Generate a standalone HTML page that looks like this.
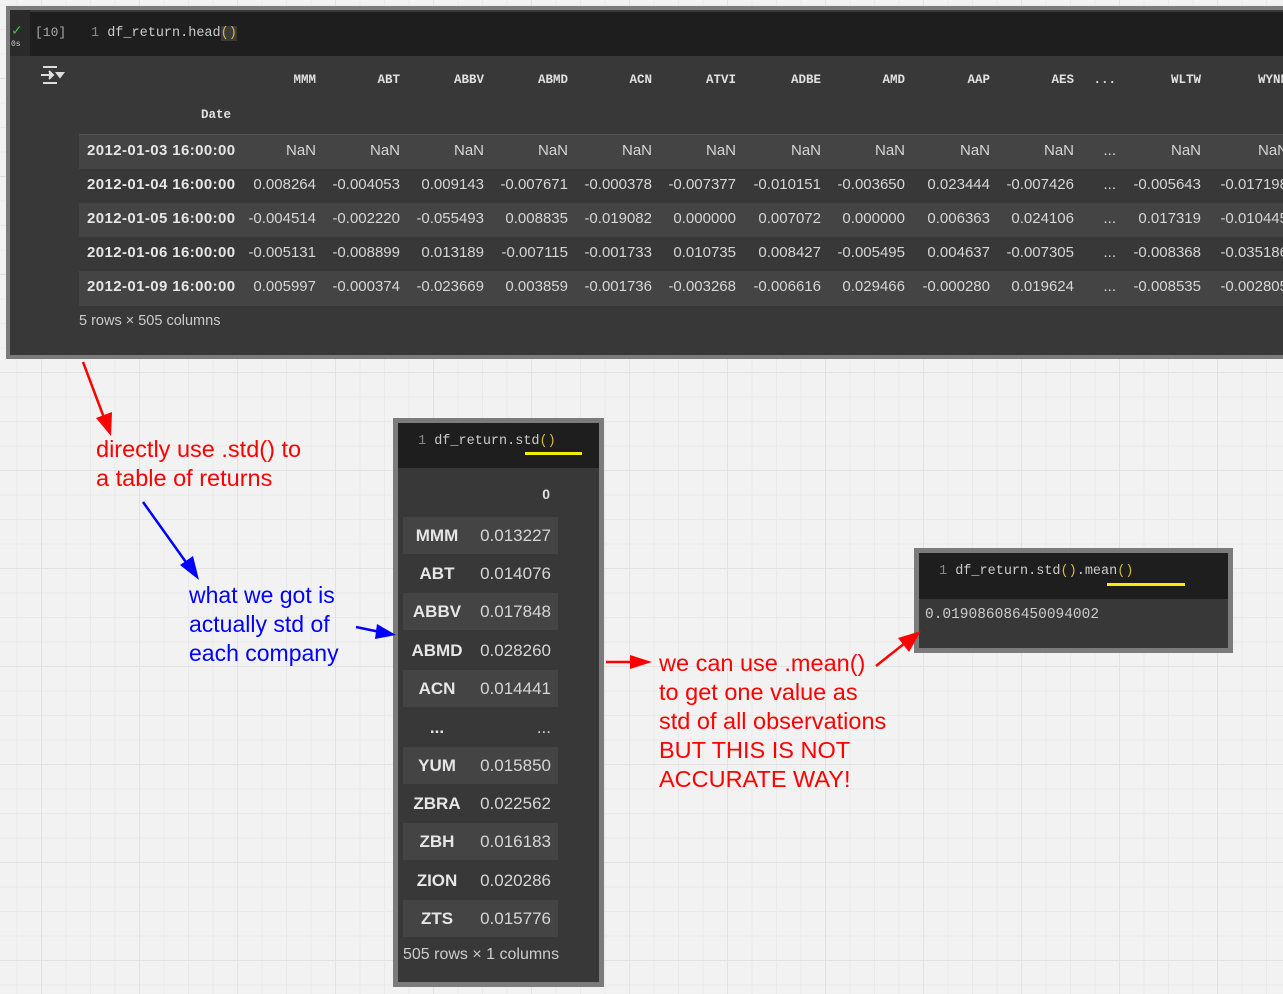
<!DOCTYPE html>
<html><head><meta charset="utf-8"><style>
*{margin:0;padding:0;box-sizing:border-box}
body{width:1283px;height:994px;overflow:hidden;position:relative;background:#f2f2f2;
background-image:linear-gradient(#e2e2e2 1px,transparent 1px),linear-gradient(90deg,#e2e2e2 1px,transparent 1px),linear-gradient(#e9e9e9 1px,transparent 1px),linear-gradient(90deg,#e9e9e9 1px,transparent 1px);
background-size:98px 98px,98px 98px,24.5px 24.5px,24.5px 24.5px;background-position:0 -20px,41px 0,0 -20px,41px 0;
font-family:"Liberation Sans",Arial,sans-serif}
.a{position:absolute}
.mono{font-family:"Liberation Mono",monospace}
.cell{position:absolute;background:#383838;border:4px solid #7b7b7b}
.code{position:absolute;background:#1e1e1e;color:#d4d4d4;font-family:"Liberation Mono",monospace;font-size:14px}
.t{position:absolute;color:#d6d6d6;font-size:15px;white-space:nowrap}
.h{position:absolute;color:#e0e0e0;font-family:"Liberation Mono",monospace;font-weight:bold;font-size:12.5px;white-space:nowrap;text-align:right}
.ann{position:absolute;font-size:23px;line-height:29px;white-space:nowrap}
</style></head><body>

<div class="cell" style="left:6px;top:6px;width:1290px;height:353px;border-width:4px"></div>
<div class="a" style="left:10px;top:10px;width:20px;height:46px;background:#2a2a2a"></div>
<div class="code" style="left:30px;top:12px;width:1260px;height:44px"></div>
<div class="a" style="left:11px;top:22px;color:#3cbf3c;font-size:14px">✓</div>
<div class="a mono" style="left:11px;top:40px;color:#ccc;font-size:8px">0s</div>
<div class="a mono" style="left:35px;top:25px;color:#aaa;font-size:13px">[10]</div>
<div class="a mono" style="left:91px;top:26px;color:#ccc;font-size:13.5px"><span style="color:#888">1</span> df_return.head<span style="color:#d7ba3d;background:#3a3a3a">()</span></div>
<svg class="a" style="left:40px;top:64px" width="26" height="22"><path d="M3 3h14M3 19h14M1 11h12M9 7l4 4-4 4M17 9l3 4 3-4z" stroke="#ddd" stroke-width="2" fill="#ddd"/></svg>

<div class="a" style="left:79px;top:134px;width:1210px;height:1px;background:#555"></div>
<div class="a" style="left:79px;top:135px;width:1210px;height:34px;background:#444"></div>
<div class="a" style="left:79px;top:203px;width:1210px;height:34px;background:#444"></div>
<div class="a" style="left:79px;top:271px;width:1210px;height:35px;background:#444"></div>

<div id="hdr"></div>
<div class="h" style="left:150px;top:108px;width:81px">Date</div>
<div class="t" style="left:79px;top:313px;font-size:14.5px;color:#ccc">5 rows × 505 columns</div>

<div class="cell" style="left:393px;top:418px;width:211px;height:569px;border-width:5px"></div>
<div class="code" style="left:398px;top:423px;width:201px;height:45px"></div>
<div class="a mono" style="left:418px;top:434px;color:#ccc;font-size:13.5px"><span style="color:#888">1</span> df_return.std<span style="color:#d7ba3d">()</span></div>
<div class="a" style="left:525px;top:452px;width:57px;height:3px;background:#f0f000"></div>
<div class="h" style="left:500px;top:486px;width:50px;font-family:'Liberation Sans';font-size:14px">0</div>
<div id="std"></div>
<div class="t" style="left:403px;top:946px;font-size:16px;color:#ccc">505 rows × 1 columns</div>

<div class="cell" style="left:914px;top:548px;width:319px;height:105px;border-width:5px"></div>
<div class="code" style="left:919px;top:553px;width:309px;height:46px"></div>
<div class="a mono" style="left:939px;top:564px;color:#ccc;font-size:13.5px"><span style="color:#888">1</span> df_return.std<span style="color:#d7ba3d">()</span>.mean<span style="color:#d7ba3d">()</span></div>
<div class="a" style="left:1107px;top:583px;width:78px;height:3px;background:#f0f000"></div>
<div class="a mono" style="left:925px;top:607px;color:#ccc;font-size:14.5px">0.019086086450094002</div>

<div class="ann" style="left:96px;top:435px;color:#f00;font-size:23.5px">directly use .std() to<br>a table of returns</div>
<div class="ann" style="left:189px;top:581px;color:#00f">what we got is<br>actually std of<br>each company</div>
<div class="ann" style="left:659px;top:649px;color:#f00;font-size:23.5px">we can use .mean()<br>to get one value as<br>std of all observations<br>BUT THIS IS NOT<br>ACCURATE WAY!</div>

<svg class="a" style="left:0;top:0" width="1283" height="994">
<g stroke-width="2.5">
<line x1="83" y1="362" x2="106" y2="423" stroke="#f00"/><polygon points="96,418 112,412 111,436" fill="#f00"/>
<line x1="143" y1="502" x2="188" y2="565" stroke="#00f"/><polygon points="180,565 193,556 199,580" fill="#00f"/>
<line x1="356" y1="627" x2="380" y2="632" stroke="#00f"/><polygon points="377,624 396,635 375,639" fill="#00f"/>
<line x1="606" y1="662" x2="632" y2="662" stroke="#f00"/><polygon points="630,655 652,662 630,669" fill="#f00"/>
<line x1="876" y1="666" x2="905" y2="643" stroke="#f00"/><polygon points="898,638 921,631 909,652" fill="#f00"/>
</g></svg>

<script>
var cols=["MMM","ABT","ABBV","ABMD","ACN","ATVI","ADBE","AMD","AAP","AES","...","WLTW","WYNN"];
var rx=[316,400,484,568,652,736,821,905,990,1074,1116,1201,1288];
var rows=[["2012-01-03 16:00:00","NaN","NaN","NaN","NaN","NaN","NaN","NaN","NaN","NaN","NaN","...","NaN","NaN"],
["2012-01-04 16:00:00","0.008264","-0.004053","0.009143","-0.007671","-0.000378","-0.007377","-0.010151","-0.003650","0.023444","-0.007426","...","-0.005643","-0.017198"],
["2012-01-05 16:00:00","-0.004514","-0.002220","-0.055493","0.008835","-0.019082","0.000000","0.007072","0.000000","0.006363","0.024106","...","0.017319","-0.010445"],
["2012-01-06 16:00:00","-0.005131","-0.008899","0.013189","-0.007115","-0.001733","0.010735","0.008427","-0.005495","0.004637","-0.007305","...","-0.008368","-0.035186"],
["2012-01-09 16:00:00","0.005997","-0.000374","-0.023669","0.003859","-0.001736","-0.003268","-0.006616","0.029466","-0.000280","0.019624","...","-0.008535","-0.002805"]];
var h="";
cols.forEach(function(c,i){h+='<div class="h" style="left:'+(rx[i]-80)+'px;top:73px;width:80px">'+c+'</div>';});
rows.forEach(function(r,j){var y=142+j*34;
h+='<div class="t" style="left:87px;top:'+y+'px;font-weight:bold;color:#e6e6e6;letter-spacing:0.4px">'+r[0]+'</div>';
for(var i=1;i<r.length;i++){h+='<div class="t" style="left:'+(rx[i-1]-84)+'px;top:'+y+'px;width:84px;text-align:right">'+r[i]+'</div>';}});
document.getElementById("hdr").innerHTML=h;
var s=[["MMM","0.013227"],["ABT","0.014076"],["ABBV","0.017848"],["ABMD","0.028260"],["ACN","0.014441"],["...","..."],["YUM","0.015850"],["ZBRA","0.022562"],["ZBH","0.016183"],["ZION","0.020286"],["ZTS","0.015776"]];
var ys=[526,564,602,641,679,718,756,794,832,871,909];
var g="";
s.forEach(function(r,i){var y=ys[i];
if(i%2==0)g+='<div class="a" style="left:403px;top:'+(y-9)+'px;width:155px;height:37px;background:#444"></div>';
g+='<div class="t" style="left:403px;top:'+y+'px;width:68px;text-align:center;font-weight:bold;font-size:17px;color:#e6e6e6">'+r[0]+'</div>';
g+='<div class="t" style="left:465px;top:'+y+'px;width:86px;text-align:right;font-size:17px">'+r[1]+'</div>';});
document.getElementById("std").innerHTML=g;
</script>
</body></html>
